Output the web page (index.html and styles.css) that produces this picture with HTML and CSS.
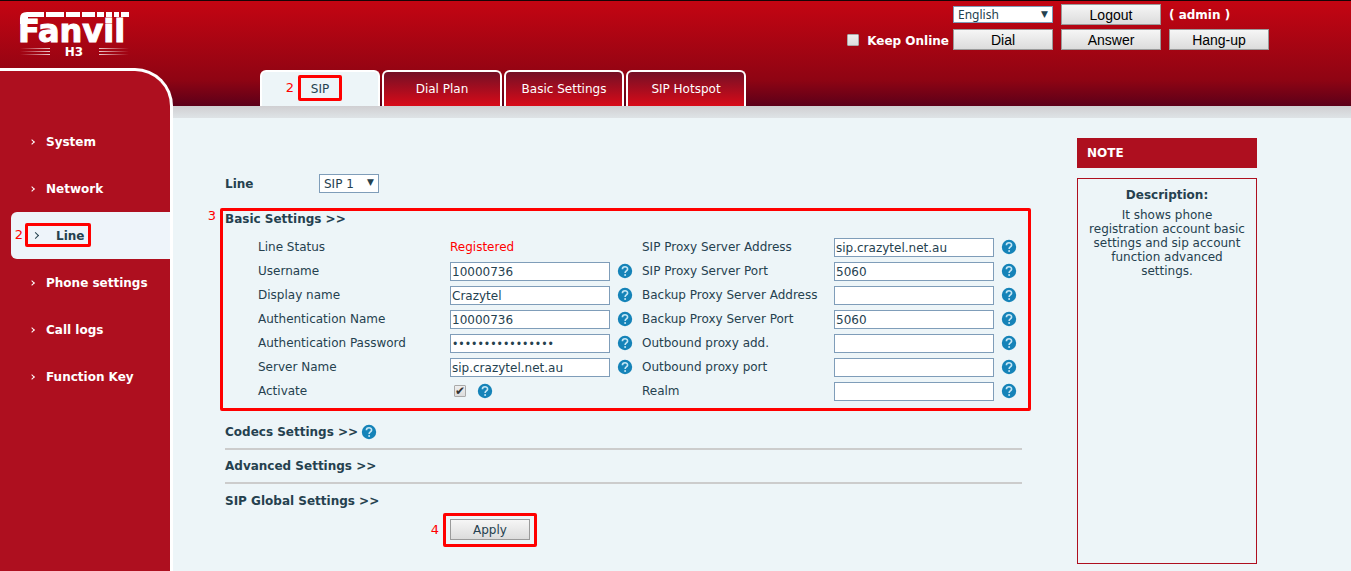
FILE: index.html
```html
<!DOCTYPE html>
<html lang="en">
<head>
<meta charset="utf-8">
<title>Fanvil H3</title>
<link rel="stylesheet" href="styles.css">
</head>
<body>
<svg class="defs" aria-hidden="true">
  <defs>
    <linearGradient id="fadeL"><stop offset="0" stop-color="#fff" stop-opacity="0"/><stop offset="1" stop-color="#fff" stop-opacity=".8"/></linearGradient>
    <linearGradient id="fadeR"><stop offset="0" stop-color="#fff" stop-opacity=".8"/><stop offset="1" stop-color="#fff" stop-opacity="0"/></linearGradient>
    <symbol id="help" viewBox="0 0 16 16">
      <circle cx="8" cy="8" r="7.2" fill="#1583b8"/>
      <path d="M5.4 6.2C5.4 3 10.7 3 10.6 6.1C10.5 7.9 8.1 8 8.1 10" fill="none" stroke="#c4e6f5" stroke-width="1.6"/>
      <circle cx="8.1" cy="12" r="1" fill="#c4e6f5"/>
    </symbol>
  </defs>
</svg>
<div class="page">
  <div class="left">
    <div class="brand">
      <svg width="132" height="60" viewBox="0 0 132 60" role="img" aria-label="Fanvil H3">
        <g fill="#fff">
          <text class="logo-name" x="18" y="42">Fanvil</text>
          <path d="M20 24V18Q20 12 27 12H44V17H28V24Z"/>
          <path d="M46 12H64V17H46ZM66 12H80V17H66ZM82 12H95V17H82ZM97 12H104V17H97ZM106 12H112V17H106ZM114 12H119V17H114ZM121 12H129V17H121Z"/>
          <text class="logo-model" x="74" y="56">H3</text>
        </g>
        <path d="M20 48h30v1H20zM20 51h30v1H20zM20 54h30v1H20z" fill="url(#fadeL)"/>
        <path d="M99 48h30v1H99zM99 51h30v1H99zM99 54h30v1H99z" fill="url(#fadeR)"/>
      </svg>
    </div>
    <nav class="sidebar">
      <a class="item" href="#">System</a>
      <a class="item" href="#">Network</a>
      <a class="item current" href="#">Line<span class="mark"><span class="num">2</span></span></a>
      <a class="item" href="#">Phone settings</a>
      <a class="item" href="#">Call logs</a>
      <a class="item" href="#">Function Key</a>
    </nav>
  </div>
  <div class="right">
    <header class="top">
      <div class="controls">
        <span></span>
        <span class="pick lang"><select aria-label="Language"><option>English</option></select></span>
        <button type="button">Logout</button>
        <b class="user">( admin )</b>
        <label class="keep"><input class="tick" type="checkbox"><b>Keep Online</b></label>
        <button type="button">Dial</button>
        <button type="button">Answer</button>
        <button type="button">Hang-up</button>
      </div>
    </header>
    <nav class="tabs">
      <a class="tab on" href="#">SIP<span class="mark"><span class="num">2</span></span></a>
      <a class="tab" href="#">Dial Plan</a>
      <a class="tab" href="#">Basic Settings</a>
      <a class="tab" href="#">SIP Hotspot</a>
    </nav>
    <div class="shade"></div>
    <div class="body">
      <main class="settings">
        <div class="line-row">
          <label for="line">Line</label>
          <span class="pick"><select id="line"><option>SIP 1</option></select></span>
        </div>
        <section class="basic">
          <h2>Basic Settings &gt;&gt;</h2>
          <div class="fields">
            <span>Line Status</span><span class="status">Registered</span>
            <label for="pa">SIP Proxy Server Address</label><span class="cell"><input class="box" id="pa" value="sip.crazytel.net.au"><svg class="help"><use href="#help"/></svg></span>
            <label for="un">Username</label><span class="cell"><input class="box" id="un" value="10000736"><svg class="help"><use href="#help"/></svg></span>
            <label for="pp">SIP Proxy Server Port</label><span class="cell"><input class="box" id="pp" value="5060"><svg class="help"><use href="#help"/></svg></span>
            <label for="dn">Display name</label><span class="cell"><input class="box" id="dn" value="Crazytel"><svg class="help"><use href="#help"/></svg></span>
            <label for="ba">Backup Proxy Server Address</label><span class="cell"><input class="box" id="ba"><svg class="help"><use href="#help"/></svg></span>
            <label for="an">Authentication Name</label><span class="cell"><input class="box" id="an" value="10000736"><svg class="help"><use href="#help"/></svg></span>
            <label for="bp">Backup Proxy Server Port</label><span class="cell"><input class="box" id="bp" value="5060"><svg class="help"><use href="#help"/></svg></span>
            <label for="ap">Authentication Password</label><span class="cell"><input class="box secret" id="ap" type="password" value="abcdefghijklmnop"><svg class="help"><use href="#help"/></svg></span>
            <label for="oa">Outbound proxy add.</label><span class="cell"><input class="box" id="oa"><svg class="help"><use href="#help"/></svg></span>
            <label for="sn">Server Name</label><span class="cell"><input class="box" id="sn" value="sip.crazytel.net.au"><svg class="help"><use href="#help"/></svg></span>
            <label for="op">Outbound proxy port</label><span class="cell"><input class="box" id="op"><svg class="help"><use href="#help"/></svg></span>
            <label for="ac">Activate</label><span class="cell check"><input class="tick" id="ac" type="checkbox" checked><svg class="help"><use href="#help"/></svg></span>
            <label for="re">Realm</label><span class="cell"><input class="box" id="re"><svg class="help"><use href="#help"/></svg></span>
          </div>
          <span class="mark"><span class="num">3</span></span>
        </section>
        <section class="fold"><h2>Codecs Settings &gt;&gt;</h2><svg class="help"><use href="#help"/></svg></section>
        <section class="fold"><h2>Advanced Settings &gt;&gt;</h2></section>
        <section class="fold"><h2>SIP Global Settings &gt;&gt;</h2></section>
        <div class="actions"><button type="button">Apply</button><span class="mark"><span class="num">4</span></span></div>
      </main>
      <aside class="note">
        <h2>NOTE</h2>
        <div class="desc">
          <h3>Description:</h3>
          <p>It shows phone registration account basic settings and sip account function advanced settings.</p>
        </div>
      </aside>
    </div>
  </div>
</div>
</body>
</html>
```
FILE: styles.css
```css
* { box-sizing: border-box; }
body {
  margin: 0;
  background: #edf5f8;
  color: #25414f;
  font: 12px/16px "DejaVu Sans", Verdana, sans-serif;
}
h2, h3, p { margin: 0; font-size: 12px; }
a { color: inherit; text-decoration: none; }
.defs { position: absolute; width: 0; height: 0; }
.page {
  display: grid;
  grid-template-columns: 173px 1fr;
  min-height: 100vh;
  background: linear-gradient(#c40512, #8f0413 75%, #5c0019) top / 100% 105px no-repeat;
  border-top: 1px solid #160506;
}
.left { display: flex; flex-direction: column; }
.brand { height: 67px; }
.brand svg { display: block; margin-top: -1px; }
.logo-name {
  font: bold 32px "DejaVu Sans", Verdana, sans-serif;
  stroke: #fff;
  stroke-width: 1px;
}
.logo-model { font: bold 12px "DejaVu Sans", Verdana, sans-serif; text-anchor: middle; }
.sidebar {
  flex: 1;
  padding-top: 47px;
  background: #ae0f1f;
  border-top: 3px solid #fff;
  border-right: 3px solid #fff;
  border-top-right-radius: 38px;
  color: #fff;
  font-weight: bold;
}
.item {
  display: flex;
  align-items: center;
  position: relative;
  height: 47px;
  padding-left: 30px;
}
.item::before {
  content: "";
  width: 4px;
  height: 4px;
  margin-right: 11px;
  border: solid currentColor;
  border-width: 1px 1px 0 0;
  transform: rotate(45deg);
}
.item:not(.current)::before { width: 3px; height: 3px; margin-right: 12px; }
.current {
  margin-left: 11px;
  padding-left: 22px;
  border-radius: 6px 0 0 6px;
  background: #eef4fa;
  color: #25414f;
}
.current::before { margin-right: 18px; }

/* Numbered callouts laid over the controls */
.mark {
  position: absolute;
  border: 3px solid #f00;
  border-radius: 2px;
  pointer-events: none;
}
.num {
  position: absolute;
  right: 100%;
  top: 50%;
  margin-right: 7px;
  color: #f00;
  font-size: 13px;
  font-weight: normal;
  line-height: 16px;
  transform: translateY(-50%);
}
.item .mark { left: 14px; top: 11px; width: 66px; height: 24px; }
.item .num { margin-right: 5px; }
.tab .mark { left: 36px; top: 3px; width: 44px; height: 26px; }
.basic .mark { inset: 0 -9px 0 -5px; }
.basic .num { top: 5px; }
.actions .mark { left: -7px; top: -6px; width: 94px; height: 34px; }

.top { height: 69px; padding: 3px 82px 0 0; color: #fff; }
.controls {
  display: grid;
  grid-template-columns: auto repeat(3, 100px);
  grid-auto-rows: 21px;
  gap: 4px 8px;
  justify-content: end;
  align-items: center;
}
button {
  height: 21px;
  padding: 0;
  border: 1px solid #9a9a9a;
  background: linear-gradient(#f6f6f6, #dcdcdc);
  color: #000;
  font: 14px "Liberation Sans", Arial, sans-serif;
}
.keep { display: flex; align-items: center; gap: 8px; margin-right: -4px; }
.keep b { padding-top: 3px; }
.tick {
  appearance: none;
  display: grid;
  place-items: center;
  width: 12px;
  height: 12px;
  margin: 0;
  border: 1px solid #aaa;
  border-radius: 1px;
  background: linear-gradient(#eee, #ddd);
}
.tick:checked::after { content: "✔"; color: #333; font-size: 12px; line-height: 10px; }
.pick { position: relative; }
.pick select {
  display: block;
  appearance: none;
  width: 100%;
  height: 19px;
  padding: 0 4px;
  border: 1px solid #7f9db9;
  border-radius: 0;
  background: #fff;
  color: #25414f;
  font: inherit;
}
.pick::after {
  content: "▼";
  position: absolute;
  right: 5px;
  top: 0;
  color: #25414f;
  font-size: 9px;
  pointer-events: none;
}
.lang select { height: 17px; font: 12px "Noto Sans", sans-serif; line-height: 15px; }
.tabs { display: flex; gap: 2px; padding-left: 87px; }
.tab {
  position: relative;
  width: 120px;
  height: 36px;
  border: 2px solid #fff;
  border-bottom: 0;
  border-radius: 6px 6px 0 0;
  background: linear-gradient(#741026, #d80a18);
  color: #fff;
  line-height: 34px;
  text-align: center;
}
.tab.on { background: #edf5f8; color: #25414f; }
.shade { height: 12px; background: linear-gradient(#d0cfd2, #dee3e6); }
.body { display: flex; gap: 55px; padding: 20px 94px 7px 52px; }
.settings { flex: 1; padding-top: 36px; }
.line-row { display: flex; align-items: center; height: 19px; font-weight: bold; }
.line-row label { width: 94px; }
.line-row .pick { width: 60px; font-weight: normal; }
.basic {
  position: relative;
  height: 203px;
  margin-top: 15px;
  padding-top: 3px;
}
.fields {
  display: grid;
  grid-template-columns: 192px 192px 192px 1fr;
  grid-auto-rows: 24px;
  align-items: center;
  padding: 8px 0 0 33px;
}
.status { color: #f00; }
.cell { display: flex; align-items: center; gap: 7px; }
.box {
  width: 160px;
  height: 19px;
  padding: 1px 1px 0;
  border: 1px solid #7f9db9;
  background: #fff;
  color: #25414f;
  font: inherit;
}
.secret { font-family: "DejaVu Sans Condensed", "DejaVu Sans", sans-serif; }
.check { padding-left: 4px; gap: 11px; }
.help { flex: none; width: 16px; height: 16px; }
.fold {
  display: flex;
  align-items: center;
  gap: 3px;
  height: 34px;
  border-bottom: 2px solid #ccc;
}
.basic + .fold { height: 39px; padding-top: 5px; }
.fold:nth-last-child(2) { border: 0; }
.actions { position: relative; width: 80px; margin: 1px 0 0 225px; }
.actions button { width: 80px; color: #25414f; font: inherit; display: block; }
.note { width: 180px; display: flex; flex-direction: column; gap: 10px; }
.note h2 { padding: 7px 10px; background: #ae0f1f; color: #fff; }
.desc {
  flex: 1;
  min-height: 386px;
  padding: 8px 10px;
  border: 1px solid #ae0f1f;
  line-height: 14px;
  text-align: center;
}
.desc h3 { margin-bottom: 5px; line-height: 16px; }
```
